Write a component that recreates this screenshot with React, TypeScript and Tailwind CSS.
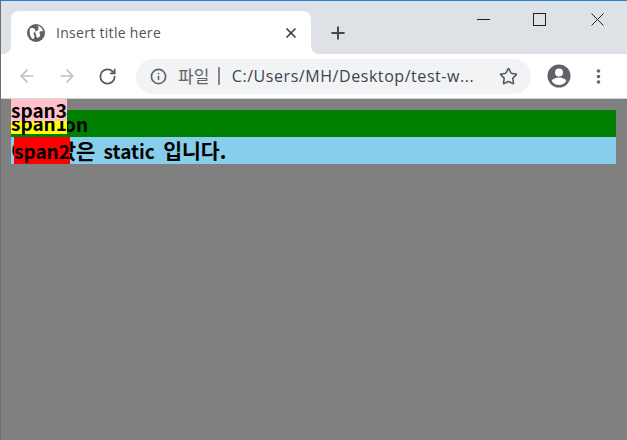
import { ArrowLeft, ArrowRight, RotateCw, Info, Star, Plus, X, MoreVertical } from 'lucide-react';

const Globe = () => (
  <svg width="18" height="18" viewBox="0 0 18 18" className="shrink-0">
    <circle cx="9" cy="9" r="9" fill="#5f6368" />
    <path d="M3 4.500c2-.8 4-.3 5 1s.6 2.400-.6 2.800-1 2-.2 3 .2 3-1 4C3.500 13.500 2 10 3 4.500zM11 1.500c2.500 1 4.500 3 5 5.500-1.500.5-3 0-3.500 1.200s1.500 2.300.5 3.800-2 2-3 1.500-.5-3-1.500-4 .5-2.500 2-3 1-3.500.5-5z" fill="#fff" />
  </svg>
);

const Account = () => (
  <svg width="24" height="24" viewBox="0 0 24 24">
    <path
      d="M12 0.500a11.500 11.500 0 1 0 0 23 11.500 11.500 0 0 0 0-23zm0 4a4 4 0 1 1 0 8 4 4 0 0 1 0-8zm0 16.500c-3 0-5.700-1.500-7.200-3.800 0-2.400 4.800-3.700 7.200-3.700s7.200 1.300 7.200 3.700c-1.500 2.300-4.200 3.800-7.200 3.800z"
      fill="#5f6368"
    />
  </svg>
);

export default function App() {
  return (
    <div className="w-[627px] h-[440px] flex flex-col overflow-hidden bg-[#808080] border-l border-[#6d6d6d] border-t border-t-[#1a86d9] font-['Noto_Sans',sans-serif]">
      {/* Tab strip */}
      <div className="h-[53px] shrink-0 bg-[#dee1e6] flex items-end pl-[10px]">
        <div className="relative w-[300px] h-[43px] bg-white rounded-t-[8px] flex items-center pl-[16px] pr-[12px]">
          <div className="absolute bottom-0 -left-[8px] w-[8px] h-[8px] bg-white">
            <div className="w-full h-full bg-[#dee1e6] rounded-br-[8px]"></div>
          </div>
          <div className="absolute bottom-0 -right-[8px] w-[8px] h-[8px] bg-white">
            <div className="w-full h-full bg-[#dee1e6] rounded-bl-[8px]"></div>
          </div>
          <Globe />
          <span className="ml-[11px] text-[14px] tracking-[0.3px] text-[#4a5560] font-['Open_Sans',sans-serif]">Insert title here</span>
          <X size={16} strokeWidth={2.6} className="ml-auto text-[#3c4043]" />
        </div>
        <div className="h-[43px] flex items-center ml-[17px]">
          <Plus size={20} strokeWidth={2.4} className="text-[#45484c]" />
        </div>
        <div className="ml-auto self-start flex items-center gap-[43px] pt-[12px] pr-[23px] text-[#222]">
          <div className="w-[13px] h-[1px] bg-[#222]"></div>
          <div className="w-[13px] h-[13px] border border-[#222] mr-[2px]"></div>
          <svg width="13" height="13" viewBox="0 0 13 13">
            <path d="M0.500 0.500l12 12M12.500 0.500l-12 12" stroke="#222" strokeWidth="1" fill="none" />
          </svg>
        </div>
      </div>

      {/* Toolbar */}
      <div className="h-[45px] shrink-0 bg-white border-b border-[#d5d6d8] flex items-center pl-[16px]">
        <ArrowLeft size={20} strokeWidth={2} className="text-[#bdc0c4]" />
        <ArrowRight size={20} strokeWidth={2} className="ml-[20px] text-[#bdc0c4]" />
        <RotateCw size={19} strokeWidth={2.2} className="ml-[21px] text-[#55595e]" />
        <div className="ml-[19px] w-[395px] h-[35px] rounded-full bg-[#f1f3f4] flex items-center pl-[14px]">
          <Info size={17} strokeWidth={2.3} className="text-[#5f6368]" />
          <span className="ml-[11px] text-[17px] text-[#5f6368] font-['Noto_Sans_CJK_KR',sans-serif]">파일</span>
          <span className="ml-[9px] w-[1.5px] h-[18px] bg-[#85888c]"></span>
          <span className="ml-[12px] text-[16px] text-[#3c4450] font-['Open_Sans',sans-serif] tracking-[0.56px]">C:/Users/MH/Desktop/test-w...</span>
          <Star size={19} strokeWidth={2} className="ml-auto mr-[13px] text-[#55595e]" />
        </div>
        <div className="ml-[16px]"><Account /></div>
        <MoreVertical size={19} strokeWidth={2.6} className="ml-[18px] text-[#5f6368]" />
      </div>

      {/* Page */}
      <div className="relative flex-1 pt-[11px] pl-[10px] pr-[11px] text-[19px] leading-[27px] font-bold text-black font-['Noto_Sans_CJK_KR',sans-serif]">
        <div className="relative h-[27px] bg-[#008000] pl-[53px]">
          <span>on</span>
          <span className="absolute left-0 top-[-1px] w-[56px] h-[25px] bg-[#ffff00]">span1</span>
        </div>
        <div className="relative h-[27px] bg-[#87ceeb] whitespace-pre [word-spacing:4px]">
          <span className="text-[21px]"><span className="mr-[7px]">이것</span>값은</span> <span>static</span> <span className="text-[20.5px]">입니다.</span>
          <span className="absolute left-[3px] top-0 w-[56px] h-[27px] bg-[#ff0000]">span2</span>
        </div>
        <span className="absolute left-[10px] top-0 w-[56px] h-[22px] bg-[#ffc0cb] leading-[22px]">span3</span>
      </div>
    </div>
  );
}
